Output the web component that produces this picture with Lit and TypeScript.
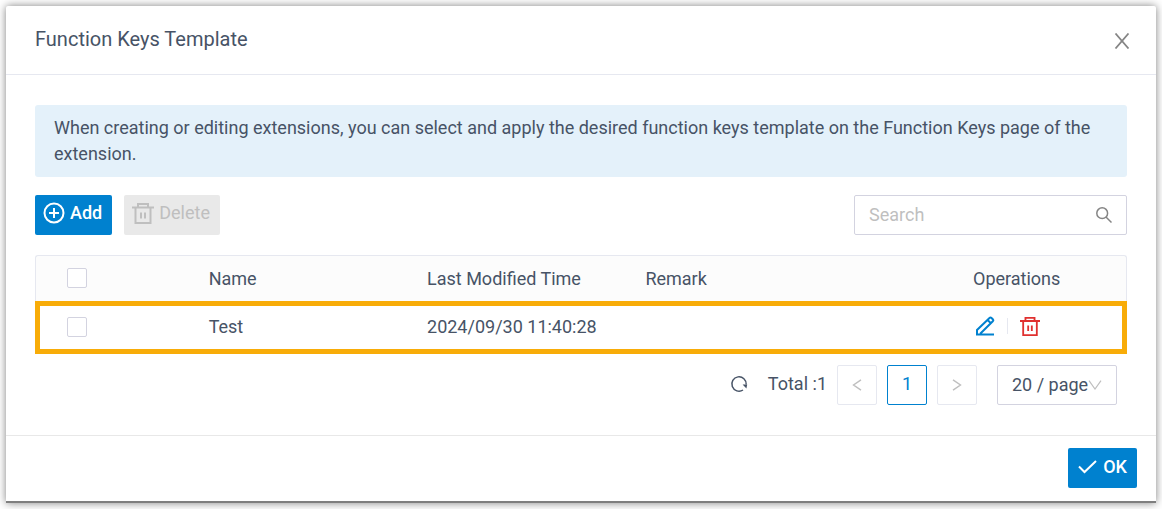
import { LitElement, html, css, svg } from "lit";
import { customElement, state } from "lit/decorators.js";

interface TemplateRow {
  name: string;
  modified: string;
  remark: string;
}

const trashPath = svg`
  <path d="M0 5.5H22M6 5V2H16V5M3.5 6V21H18.5V6M9 10.5V16.5M13 10.5V16.5" />
`;

@customElement("app-root")
export class AppRoot extends LitElement {
  static styles = css`
    :host {
      display: block;
      padding: 6px;
      font: 18px/26px Roboto, sans-serif;
      color: #475366;
      background: #fff;
    }
    * {
      box-sizing: border-box;
    }
    button,
    input,
    select {
      font: inherit;
      color: inherit;
      margin: 0;
    }
    svg {
      display: block;
      flex: none;
      fill: none;
      stroke: currentColor;
    }
    .dialog {
      background: #fff;
      border-bottom: 2px solid #7f7f7f;
      border-radius: 2px 2px 0 0;
      box-shadow: 0 0 8px rgba(0, 0, 0, 0.5);
    }
    .header {
      display: flex;
      justify-content: space-between;
      align-items: center;
      height: 69px;
      padding: 0 24px 0 29px;
      border-bottom: 1px solid #e6e8f0;
    }
    .title {
      margin: 0;
      padding-bottom: 2px;
      font-size: 20px;
      font-weight: 400;
    }
    .icon-button {
      display: flex;
      padding: 0;
      border: 0;
      background: none;
    }
    .close {
      padding: 4px 2px 2px;
      color: #858585;
    }
    .body {
      padding: 30px 29px;
    }
    .notice {
      margin: 0 0 18px;
      padding: 10px 19px;
      border-radius: 3px;
      background: #e4f1fa;
    }
    .toolbar {
      display: flex;
      gap: 12px;
      margin-bottom: 20px;
    }
    .button {
      display: flex;
      align-items: center;
      gap: 5px;
      height: 40px;
      padding: 0 10px 4px 8px;
      border: 0;
      border-radius: 2px;
      color: #fff;
      background: #0081cf;
      font-weight: 500;
    }
    .button:disabled {
      color: #bfbfbf;
      background: #e9e9e9;
      font-weight: 400;
    }
    .search {
      display: flex;
      align-items: center;
      width: 273px;
      height: 40px;
      margin-left: auto;
      padding: 0 14px;
      border: 1px solid #d3d3e0;
      border-radius: 2px;
      color: #858585;
    }
    .search-input {
      flex: 1;
      min-width: 0;
      padding: 0;
      border: 0;
      outline: 0;
      background: none;
    }
    .search-input::placeholder {
      color: #bfbfbf;
      opacity: 1;
    }
    .table {
      width: 100%;
      table-layout: fixed;
      border-collapse: separate;
      border-spacing: 0;
    }
    .col-wide {
      width: 20%;
    }
    .col-remark {
      width: 30%;
    }
    .col-operations {
      width: 170px;
    }
    .th,
    .td {
      padding: 0 16px;
      text-align: left;
      font-weight: 400;
    }
    .th {
      height: 46px;
      border-top: 1px solid #e6e8f0;
      background: #fcfcfc;
    }
    .th:first-child {
      border-left: 1px solid #e6e8f0;
      border-top-left-radius: 3px;
    }
    .th:last-child {
      border-right: 1px solid #e6e8f0;
      border-top-right-radius: 3px;
    }
    .td {
      height: 53px;
      padding-bottom: 2px;
    }
    .td:first-child {
      padding-left: 32px;
    }
    .th:first-child {
      padding-left: 31px;
      padding-bottom: 2px;
    }
    .row-highlighted {
      outline: 5px solid #f8ac08;
      outline-offset: -5px;
    }
    .checkbox {
      display: block;
      appearance: none;
      width: 20px;
      height: 20px;
      border: 1px solid #d3d3e0;
      border-radius: 2px;
      background: #fff;
    }
    .checkbox:checked {
      background: #0081cf;
    }
    .operations {
      display: flex;
      align-items: center;
      gap: 12px;
      padding: 0 0 2px 2px;
    }
    .divider {
      width: 1px;
      height: 16px;
      background: #e6e8f0;
    }
    .edit {
      color: #0081cf;
    }
    .remove {
      color: #e0302f;
    }
    .pagination {
      display: flex;
      justify-content: flex-end;
      align-items: center;
      gap: 10px;
      padding: 11px 10px 0;
    }
    .refresh {
      padding-bottom: 2px;
    }
    .total {
      padding: 0 0 2px 10px;
    }
    .page {
      display: flex;
      align-items: center;
      justify-content: center;
      width: 40px;
      height: 40px;
      padding: 0;
      border: 1px solid #e6e8f0;
      border-radius: 2px;
      color: #bfbfbf;
      background: #fff;
    }
    .page-current {
      padding-bottom: 2px;
      border-color: #0081cf;
      color: #0081cf;
    }
    .size {
      display: grid;
      align-items: center;
      width: 120px;
      margin-left: 10px;
      color: #bfbfbf;
    }
    .size-select {
      grid-area: 1 / 1;
      appearance: none;
      width: 100%;
      height: 40px;
      padding: 0 14px;
      border: 1px solid #d3d3e0;
      border-radius: 2px;
      color: #475366;
      background: #fff;
    }
    .size-arrow {
      grid-area: 1 / 1;
      justify-self: end;
      margin-right: 15px;
      pointer-events: none;
    }
    .footer {
      display: flex;
      justify-content: flex-end;
      padding: 12px 19px 13px;
      border-top: 1px solid #e8e8e8;
    }
    .confirm {
      gap: 6px;
      padding: 0 10px 2px;
    }
  `;

  @state() private rows: TemplateRow[] = [
    { name: "Test", modified: "2024/09/30 11:40:28", remark: "" },
  ];

  private renderTrash(size: number) {
    return html`<svg width=${size} height=${size} viewBox="0 0 22 22" stroke-width="2" aria-hidden="true">${trashPath}</svg>`;
  }

  private renderRow(row: TemplateRow) {
    return html`
      <tr class="row-highlighted">
        <td class="td"><input class="checkbox" type="checkbox" aria-label="Select ${row.name}" /></td>
        <td class="td">${row.name}</td>
        <td class="td">${row.modified}</td>
        <td class="td">${row.remark}</td>
        <td class="td">
          <div class="operations">
            <button class="icon-button edit" aria-label="Edit">
              <svg width="20" height="20" viewBox="0 0 20 20" stroke-width="2" aria-hidden="true">
                <path d="M1 18.5H19M2 18V14L14.5 2Q15.5 1 16.5 2L18 3.5Q18.7 4.4 17.8 5.3L5.2 17.8M12.5 4L16 7.2" />
              </svg>
            </button>
            <span class="divider"></span>
            <button class="icon-button remove" aria-label="Delete">${this.renderTrash(20)}</button>
          </div>
        </td>
      </tr>
    `;
  }

  render() {
    return html`
      <section class="dialog" role="dialog" aria-labelledby="title">
        <header class="header">
          <h1 class="title" id="title">Function Keys Template</h1>
          <button class="icon-button close" aria-label="Close">
            <svg width="16" height="16" viewBox="0 0 16 16" stroke-width="1.8" aria-hidden="true">
              <path d="M1.5 .5L14.5 15.5M14.5 .5L1.5 15.5" />
            </svg>
          </button>
        </header>

        <div class="body">
          <p class="notice">
            When creating or editing extensions, you can select and apply the desired function keys
            template on the Function Keys page of the extension.
          </p>

          <div class="toolbar">
            <button class="button">
              <svg width="22" height="22" viewBox="0 0 22 22" stroke-width="2" aria-hidden="true">
                <circle cx="11" cy="11" r="9.5" />
                <path d="M11 6V16M6 11H16" />
              </svg>
              Add
            </button>
            <button class="button" disabled>${this.renderTrash(22)} Delete</button>
            <label class="search">
              <input class="search-input" type="text" placeholder="Search" aria-label="Search" />
              <svg width="16" height="16" viewBox="0 0 16 16" stroke-width="1.5" aria-hidden="true">
                <circle cx="6.2" cy="6.2" r="5.4" />
                <path d="M10 10L15.5 15.5" />
              </svg>
            </label>
          </div>

          <table class="table">
            <colgroup>
              <col />
              <col class="col-wide" />
              <col class="col-wide" />
              <col class="col-remark" />
              <col class="col-operations" />
            </colgroup>
            <thead>
              <tr>
                <th class="th"><input class="checkbox" type="checkbox" aria-label="Select all" /></th>
                <th class="th">Name</th>
                <th class="th">Last Modified Time</th>
                <th class="th">Remark</th>
                <th class="th">Operations</th>
              </tr>
            </thead>
            <tbody>
              ${this.rows.map((row) => this.renderRow(row))}
            </tbody>
          </table>

          <nav class="pagination" aria-label="Pagination">
            <button class="icon-button refresh" aria-label="Refresh">
              <svg width="18" height="18" viewBox="0 0 18 18" stroke-width="1.5" aria-hidden="true">
                <path d="M13 15A7.2 7.2 0 1 1 16.2 9.5" />
                <path d="M12.6 9.5H17.2L16.4 13.5Z" fill="currentColor" stroke="none" />
              </svg>
            </button>
            <span class="total">Total :${this.rows.length}</span>
            <button class="page" disabled aria-label="Previous page">
              <svg width="10" height="12" viewBox="0 0 10 12" stroke-width="1.4" aria-hidden="true">
                <path d="M9 .8L1.5 6L9 11.2" />
              </svg>
            </button>
            <button class="page page-current" aria-current="page">1</button>
            <button class="page" disabled aria-label="Next page">
              <svg width="10" height="12" viewBox="0 0 10 12" stroke-width="1.4" aria-hidden="true">
                <path d="M1 .8L8.5 6L1 11.2" />
              </svg>
            </button>
            <div class="size">
              <select class="size-select" aria-label="Rows per page">
                <option>20 / page</option>
              </select>
              <svg class="size-arrow" width="14" height="10" viewBox="0 0 14 10" stroke-width="1.2" aria-hidden="true">
                <path d="M1 .6L7 9L13 .6" />
              </svg>
            </div>
          </nav>
        </div>

        <footer class="footer">
          <button class="button confirm">
            <svg width="19" height="14" viewBox="0 0 19 14" stroke-width="2" aria-hidden="true">
              <path d="M1 6.5L6.5 12L18 1" />
            </svg>
            OK
          </button>
        </footer>
      </section>
    `;
  }
}
